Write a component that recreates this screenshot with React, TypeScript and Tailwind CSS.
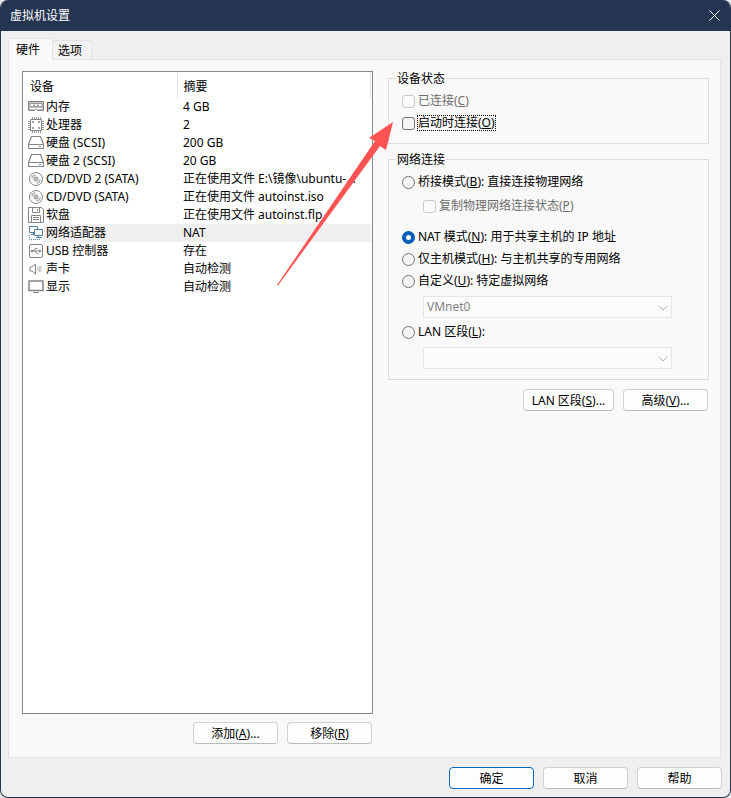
import { useState, ReactNode } from "react";

interface Device {
  id: string;
  name: string;
  summary: string;
  icon: ReactNode;
}

const DEVICES: Device[] = [
  { id: "memory", name: "内存", summary: "4 GB", icon: <MemoryIcon /> },
  { id: "cpu", name: "处理器", summary: "2", icon: <CpuIcon /> },
  { id: "disk1", name: "硬盘 (SCSI)", summary: "200 GB", icon: <DiskIcon /> },
  { id: "disk2", name: "硬盘 2 (SCSI)", summary: "20 GB", icon: <DiskIcon /> },
  { id: "cd2", name: "CD/DVD 2 (SATA)", summary: "正在使用文件 E:\\镜像\\ubuntu-...", icon: <DiscIcon /> },
  { id: "cd1", name: "CD/DVD (SATA)", summary: "正在使用文件 autoinst.iso", icon: <DiscIcon /> },
  { id: "floppy", name: "软盘", summary: "正在使用文件 autoinst.flp", icon: <FloppyIcon /> },
  { id: "net", name: "网络适配器", summary: "NAT", icon: <NetworkIcon /> },
  { id: "usb", name: "USB 控制器", summary: "存在", icon: <UsbIcon /> },
  { id: "sound", name: "声卡", summary: "自动检测", icon: <SoundIcon /> },
  { id: "display", name: "显示", summary: "自动检测", icon: <DisplayIcon /> },
];

function Icon({ children }: { children: ReactNode }) {
  return (
    <svg className="size-4 shrink-0" viewBox="0 0 16 16" fill="none" stroke="#858585" aria-hidden="true">
      {children}
    </svg>
  );
}

function MemoryIcon() {
  return (
    <Icon>
      <path d="M.5 2.5h15v9H.5z" fill="#c4c4c4" />
      <path d="M2 4.500h12v3H2z" fill="#fff" stroke="#9a9a9a" />
      <path d="M6 4.500v3M10 4.500v3" />
      <path d="M2 9.500h12" stroke="#fff" strokeDasharray="5 1" />
      <path d="M7 11.500h2" stroke="#fff" />
    </Icon>
  );
}

function CpuIcon() {
  return (
    <Icon>
      <path d="M2.500 2.500h11v11h-11z" fill="#fff" />
      <path
        stroke="#9a9a9a"
        d="M4.500 0v2M6.500 0v2M8.500 0v2M10.500 0v2M12.500 0v2M4.500 14v2M6.500 14v2M8.500 14v2M10.500 14v2M12.500 14v2"
      />
      <path
        stroke="#9a9a9a"
        d="M0 4.500h2M0 6.500h2M0 8.500h2M0 10.500h2M0 12.500h2M14 4.500h2M14 6.500h2M14 8.500h2M14 10.500h2M14 12.500h2"
      />
      <path d="M4 5h2M10 5h2M4 11h2M10 11h2" strokeWidth="1.500" />
    </Icon>
  );
}

function DiskIcon() {
  return (
    <Icon>
      <path d="M3.500 1.500h9l3 8v4H.5v-4z" fill="#fff" strokeLinejoin="round" strokeWidth="1.200" />
      <path d="M.5 9.500h15" />
      <path d="M11 11.500h2" />
    </Icon>
  );
}

function DiscIcon() {
  return (
    <Icon>
      <circle cx="8" cy="8" r="6.500" fill="#fff" />
      <circle cx="8" cy="8" r="2" />
      <circle cx="8" cy="8" r=".5" />
      <path d="M4 7.500a4 4 0 0 1 3.500-3.500M12 8.500a4 4 0 0 1-3.500 3.500" stroke="#b0b0b0" strokeWidth="1.500" />
    </Icon>
  );
}

function FloppyIcon() {
  return (
    <Icon>
      <path d="M.5.5h13l2 2v13H.5z" fill="#fff" />
      <path d="M4.500.5v5h7v-5M9.500 2v2" />
      <path d="M3.500 15.500v-7h9v7M5 10.500h6M5 12.500h6" />
    </Icon>
  );
}

function NetworkIcon() {
  return (
    <Icon>
      <g stroke="#4f7f9c">
        <path d="M1.500 1.500h8v6h-8zM3 9.500h4M5.500 7.500v2" fill="#fff" />
        <path d="M6.500 4.500h8v6h-8z" fill="#fff" />
        <path d="M10.500 10.500v2M8 12.500h6" />
        <path d="M1.500 10v4.500h11" strokeDasharray="1 1" />
      </g>
    </Icon>
  );
}

function UsbIcon() {
  return (
    <Icon>
      <rect x="1.500" y="1.500" width="13" height="13" rx="1.500" fill="#fafafa" />
      <path d="M3.500 8h9M5.500 8l2-2.500h2M7 8l2 2.500h1.500" />
      <circle cx="4" cy="8" r=".8" fill="#858585" />
      <path d="M11.500 7v2l1.500-1z" fill="#858585" />
    </Icon>
  );
}

function SoundIcon() {
  return (
    <Icon>
      <path d="M2 6v4h2l3.500 3V3L4 6z" fill="#fff" />
      <path d="M9.500 6.500q.8 1.500 0 3M11 5q1.500 3 0 6M12.500 5q1.500 3 0 6" stroke="#a8a8a8" strokeWidth=".8" />
    </Icon>
  );
}

function DisplayIcon() {
  return (
    <Icon>
      <path d="M1 2h14v9.500H1z" fill="#fff" strokeWidth="1.500" />
      <path d="M5 13.500h6" />
    </Icon>
  );
}

const BOX =
  "size-[13px] shrink-0 appearance-none border border-[#727272] bg-[#f5f5f5] disabled:border-[#c8c8c8] disabled:bg-[#fafafa]";

interface CheckProps {
  label: ReactNode;
  disabled?: boolean;
  focused?: boolean;
}

function Check({ label, disabled, focused }: CheckProps) {
  return (
    <label className={"flex h-[22px] items-center gap-0.5 " + (disabled ? "text-[#6d6d6d]" : "")}>
      <input type="checkbox" disabled={disabled} className={BOX + " rounded-[3px] checked:bg-[#005fb8]"} />
      <span className={"border border-dotted leading-[14px] " + (focused ? "border-black" : "border-transparent")}>
        {label}
      </span>
    </label>
  );
}

interface RadioProps {
  label: ReactNode;
  value: string;
  mode: string;
  onSelect: (value: string) => void;
}

function Radio({ label, value, mode, onSelect }: RadioProps) {
  return (
    <label className="flex h-[22px] items-center gap-[3px]">
      <input
        type="radio"
        name="mode"
        checked={mode === value}
        onChange={() => onSelect(value)}
        className={BOX + " rounded-full checked:border-4 checked:border-[#005fb8] checked:bg-white"}
      />
      <span>{label}</span>
    </label>
  );
}

function Combo({ label, value }: { label: string; value?: string }) {
  return (
    <div className="relative ml-[21px] w-[249px] max-w-full">
      <select
        disabled
        aria-label={label}
        className="block h-[22px] w-full appearance-none border border-[#e6e6e6] bg-[#fbfbfb] px-[3px] text-[#838383] opacity-100"
      >
        <option>{value}</option>
      </select>
      <svg className="absolute top-2 right-1 h-2 w-[10px]" viewBox="0 0 10 8" fill="none" stroke="#b4b4b4" aria-hidden="true">
        <path d="M1 2l4 4 4-4" />
      </svg>
    </div>
  );
}

function Button({ children, primary, className }: { children: ReactNode; primary?: boolean; className?: string }) {
  return (
    <button
      type="button"
      className={
        "h-[22px] rounded border bg-[#fdfdfd] pt-0.5 leading-4 hover:bg-[#e5f1fb] " +
        (primary ? "border-[#0067c0] " : "border-[#d0d0d0] border-b-[#bcbcbc] ") +
        (className ?? "w-[85px]")
      }
    >
      {children}
    </button>
  );
}

function Group({ title, children, className }: { title: string; children: ReactNode; className: string }) {
  return (
    <fieldset className={"min-w-0 border border-[#dcdcdc] px-[13px] pt-[3px] " + className}>
      <legend className="-ml-1.5 px-px pt-0.5 leading-4">{title}</legend>
      {children}
    </fieldset>
  );
}

export default function App() {
  const [selected, setSelected] = useState("net");
  const [mode, setMode] = useState("nat");

  return (
    <div className="bg-[#e8e8e8]">
      <main className="relative flex min-h-screen flex-col overflow-hidden rounded-lg border border-t-0 border-[#253551] bg-[#efefef] font-['Noto_Sans','Noto_Sans_CJK_SC',sans-serif] text-xs leading-4 text-black">
        <header className="flex h-[31px] items-center justify-between bg-[#253551] pr-2.5 pl-[9px] text-white">
          <h1>虚拟机设置</h1>
          <button type="button" aria-label="关闭">
            <svg className="size-[11px]" viewBox="0 0 11 11" stroke="#fff" aria-hidden="true">
              <path d="M.5.5l10 10M10.500.5l-10 10" />
            </svg>
          </button>
        </header>

        <div className="flex flex-1 flex-col px-[7px] pt-[7px] pb-2">
          <div role="tablist" className="flex items-end">
            <button
              type="button"
              role="tab"
              aria-selected="true"
              className="relative z-10 -mb-px h-[22px] border border-b-0 border-[#e3e3e3] bg-[#f9f9f9] pr-3 pl-[7px]"
            >
              硬件
            </button>
            <button
              type="button"
              role="tab"
              aria-selected="false"
              className="h-[19px] border border-l-0 border-b-0 border-[#e3e3e3] bg-[#f2f2f2] pt-0.5 pr-[9px] pl-[5px]"
            >
              选项
            </button>
          </div>

          <div
            role="tabpanel"
            className="mr-0.5 grid flex-1 grid-cols-[351fr_321fr] gap-[15px] border border-[#e3e3e3] bg-[#f9f9f9] pt-[9px] pr-[11px] pb-[13px] pl-[13px]"
          >
            <section className="flex min-w-0 flex-col">
              <div className="mt-0.5 flex-1 overflow-hidden border border-[#828790] bg-white pr-px">
                <table className="w-full table-fixed border-collapse text-left">
                  <thead>
                    <tr className="h-[26px]">
                      <th className="w-[154px] border-r border-[#e5e5e5] pt-1 pl-[7px] font-normal">设备</th>
                      <th className="border-r border-[#e5e5e5] pt-1 pl-1.5 font-normal">摘要</th>
                    </tr>
                  </thead>
                  <tbody>
                    {DEVICES.map((d) => {
                      const bg = d.id === selected ? "bg-[#efefef]" : "";
                      return (
                        <tr key={d.id} onClick={() => setSelected(d.id)} className="h-[18px]">
                          <td className="p-0 pl-[5px]">
                            <div className="flex items-center">
                              {d.icon}
                              <span className={"flex-1 pl-0.5 leading-[18px] " + bg}>{d.name}</span>
                            </div>
                          </td>
                          <td className={"truncate p-0 pl-1.5 leading-[18px] " + bg}>{d.summary}</td>
                        </tr>
                      );
                    })}
                  </tbody>
                </table>
              </div>
              <div className="mt-2 flex justify-end gap-[9px] pr-px">
                <Button>添加(<u>A</u>)...</Button>
                <Button>移除(<u>R</u>)</Button>
              </div>
            </section>

            <section className="min-w-0">
              <Group title="设备状态" className="pb-[9px]">
                <Check disabled label={<>已连接(<u>C</u>)</>} />
                <Check focused label={<>启动时连接(<u>O</u>)</>} />
              </Group>

              <Group title="网络连接" className="mt-1.5 pb-2.5">
                <Radio value="bridged" mode={mode} onSelect={setMode} label={<>桥接模式(<u>B</u>): 直接连接物理网络</>} />
                <div className="mt-0.5 mb-[9px] ml-[21px]">
                  <Check disabled label={<>复制物理网络连接状态(<u>P</u>)</>} />
                </div>
                <Radio value="nat" mode={mode} onSelect={setMode} label={<>NAT 模式(<u>N</u>): 用于共享主机的 IP 地址</>} />
                <Radio value="host" mode={mode} onSelect={setMode} label={<>仅主机模式(<u>H</u>): 与主机共享的专用网络</>} />
                <div className="mb-1">
                  <Radio value="custom" mode={mode} onSelect={setMode} label={<>自定义(<u>U</u>): 特定虚拟网络</>} />
                </div>
                <Combo label="特定虚拟网络" value="VMnet0" />
                <div className="mt-[3px] mb-1">
                  <Radio value="lan" mode={mode} onSelect={setMode} label={<>LAN 区段(<u>L</u>):</>} />
                </div>
                <Combo label="LAN 区段" />
              </Group>

              <div className="mt-[9px] flex justify-end gap-[9px] pr-px">
                <Button className="w-[91px]">LAN 区段(<u>S</u>)...</Button>
                <Button>高级(<u>V</u>)...</Button>
              </div>
            </section>
          </div>

          <footer className="mt-[9px] flex justify-end gap-[9px] pr-px">
            <Button primary>确定</Button>
            <Button>取消</Button>
            <Button>帮助</Button>
          </footer>
        </div>

        {/* red pointer laid over the list, aimed at the connect-at-power-on box */}
        <svg
          className="pointer-events-none absolute top-[122px] left-[275px] h-[164px] w-[118px]"
          viewBox="276 122 118 164"
          aria-hidden="true"
        >
          <path d="M277 285L375 141L369 138L393 122L386 150L380 146L278 285.500Z" fill="#ff5252" />
        </svg>
      </main>
    </div>
  );
}
